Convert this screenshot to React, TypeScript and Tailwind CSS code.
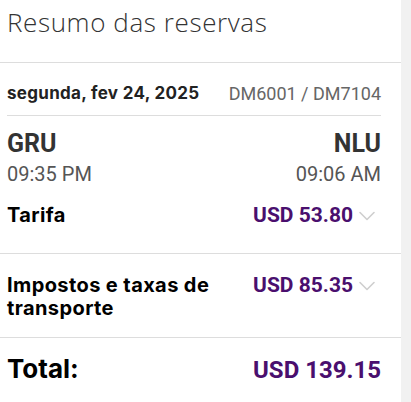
function Chevron() {
  return (
    <svg width="28" height="28" viewBox="0 0 24 24" fill="none" className="shrink-0 -my-[3px]">
      <path d="M6 9l6 6 6-6" stroke="#cfcfcf" strokeWidth="1.4" strokeLinecap="round" strokeLinejoin="round" />
    </svg>
  )
}

function PriceRow({ label, amount, top }: { label: React.ReactNode; amount: string; top?: boolean }) {
  return (
    <div className={`flex justify-between pl-[7px] pr-[20px] ${top ? 'items-start' : 'items-center'}`}>
      <div className="font-['Inter',sans-serif] text-[20px] leading-[23px] tracking-[0.4px] font-bold text-black">{label}</div>
      <div className="flex items-center">
        <span className="font-['Roboto',sans-serif] text-[21px] leading-[23px] font-bold text-[#4a0f6e]">{amount}</span>
        <Chevron />
      </div>
    </div>
  )
}

export default function App() {
  return (
    <div className="flex w-full h-[402px] bg-white">
      <div className="w-[401px] bg-white">
        <h1 className="pl-[7px] pt-[5px] h-[62px] font-['Open_Sans',sans-serif] font-light text-[26px] leading-[34px] tracking-[0.6px] text-[#333]">
          Resumo das reservas
        </h1>
        <div className="border-t border-[#ddd]" />

        <div className="flex items-center justify-between pl-[7px] pr-[20px] pt-[9px] h-[52px]">
          <span className="font-['Inter',sans-serif] font-bold text-[17px] tracking-[0.3px] text-[#222]">segunda, fev 24, 2025</span>
          <span className="font-['Roboto',sans-serif] text-[18px] text-[#666]">DM6001 / DM7104</span>
        </div>
        <div className="ml-[7px] mr-[20px] border-t border-[#ddd]" />

        <div className="flex justify-between pl-[7px] pr-[20px] pt-[13px] font-['Roboto',sans-serif]">
          <div>
            <div className="text-[25px] font-bold text-[#333] leading-[30px]">GRU</div>
            <div className="mt-[2px] text-[20px] text-[#555] leading-[26px]">09:35 PM</div>
          </div>
          <div className="text-right">
            <div className="text-[25px] font-bold text-[#333] leading-[30px]">NLU</div>
            <div className="mt-[2px] text-[20px] text-[#555] leading-[26px]">09:06 AM</div>
          </div>
        </div>

        <div className="pt-[17px] pb-[26px]">
          <PriceRow label="Tarifa" amount="USD 53.80" />
        </div>
        <div className="border-t border-[#ddd]" />

        <div className="pt-[20px] pb-[17px]">
          <PriceRow top label={<>Impostos e taxas de<br />transporte</>} amount="USD 85.35" />
        </div>
        <div className="border-t border-[#ddd]" />

        <div className="flex items-baseline justify-between pl-[7px] pr-[20px] pt-[15px]">
          <span className="font-['Inter',sans-serif] font-bold text-[26px] leading-[32px] text-black">Total:</span>
          <span className="font-['Roboto',sans-serif] font-bold text-[24px] leading-[32px] text-[#4a0f6e]">USD 139.15</span>
        </div>
      </div>
      <div className="flex-1 bg-[#f1f1f1]" />
    </div>
  )
}
